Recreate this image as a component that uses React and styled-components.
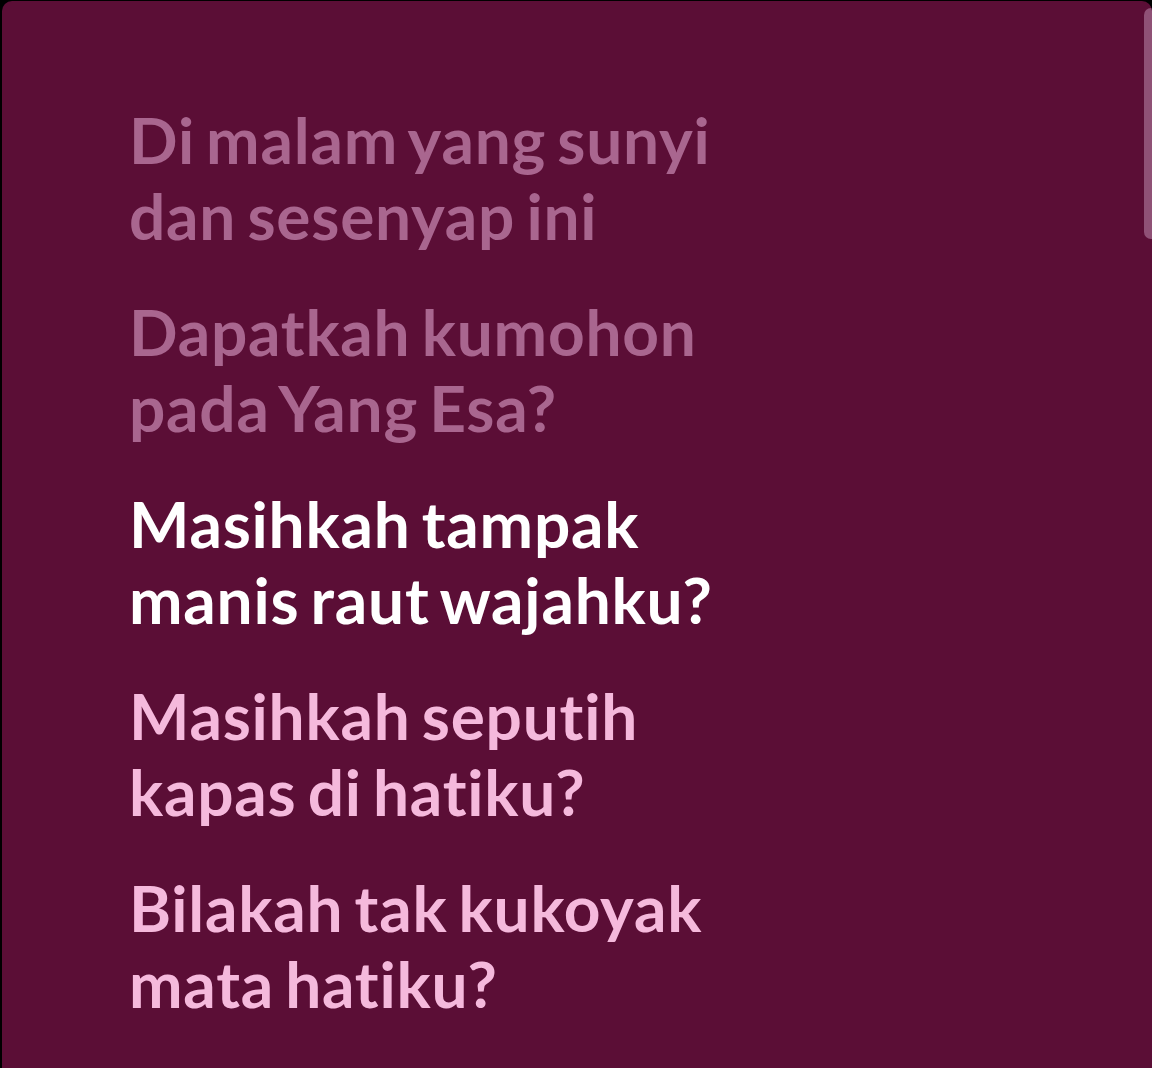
import React from "react";
import styled, { createGlobalStyle } from "styled-components";

const GlobalStyle = createGlobalStyle`
  html, body {
    margin: 0;
    background: #000;
  }
  body {
    font-family: "Lato", "Liberation Sans", sans-serif;
    overflow: hidden;
  }
`;

const Frame = styled.div`
  padding: 1px 0 0 2px;
  height: 1068px;
  box-sizing: border-box;
`;

const Panel = styled.section`
  position: relative;
  height: 100%;
  background: #5b0e36;
  border-radius: 10px 10px 0 0;
  overflow: hidden;
  padding: 101px 0 0 127px;
  box-sizing: border-box;
`;

const Lines = styled.div`
  display: flex;
  flex-direction: column;
  gap: 40px;
`;

const lineColors = {
  past: "#a9668f",
  active: "#ffffff",
  next: "#f5b9dc",
};

const Line = styled.p`
  margin: 0;
  font-size: 64px;
  line-height: 76px;
  font-weight: 700;
  letter-spacing: 0.012em;
  word-spacing: -0.08em;
  font-variant-ligatures: none;
  color: ${(p) => lineColors[p.$state]};
`;

const ScrollThumb = styled.div`
  position: absolute;
  top: 7px;
  right: -6px;
  width: 14px;
  height: 231px;
  border-radius: 7px;
  background: #8f5176;
`;

const lyrics = [
  { text: ["Di malam yang sunyi", "dan sesenyap ini"], state: "past" },
  { text: ["Dapatkah kumohon", "pada Yang Esa?"], state: "past" },
  { text: ["Masihkah tampak", "manis raut wajahku?"], state: "active" },
  { text: ["Masihkah seputih", "kapas di hatiku?"], state: "next" },
  { text: ["Bilakah tak kukoyak", "mata hatiku?"], state: "next" },
];

const App = () => {
  return (
    <>
      <GlobalStyle />
      <Frame>
        <Panel>
          <Lines>
            {lyrics.map((l, i) => (
              <Line key={i} $state={l.state}>
                {l.text[0]}
                <br />
                {l.text[1]}
              </Line>
            ))}
          </Lines>
          <ScrollThumb />
        </Panel>
      </Frame>
    </>
  );
};

export default App;
